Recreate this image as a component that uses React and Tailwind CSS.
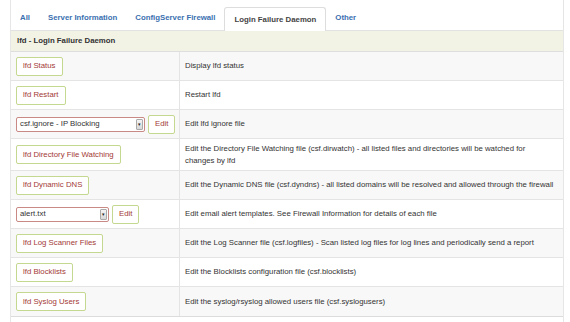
const tabs = ["All", "Server Information", "ConfigServer Firewall", "Login Failure Daemon", "Other"];

const rows = [
    { type: "button", label: "lfd Status", desc: "Display lfd status" },
    { type: "button", label: "lfd Restart", desc: "Restart lfd" },
    { type: "select", label: "csf.ignore - IP Blocking", width: "w-[129px]", desc: "Edit lfd ignore file" },
    {
        type: "button",
        label: "lfd Directory File Watching",
        desc: (
            <>
                Edit the Directory File Watching file (csf.dirwatch) - all listed files and directories will be watched for
                <br />
                changes by lfd
            </>
        ),
        tall: true,
    },
    {
        type: "button",
        label: "lfd Dynamic DNS",
        desc: "Edit the Dynamic DNS file (csf.dyndns) - all listed domains will be resolved and allowed through the firewall",
    },
    { type: "select", label: "alert.txt", width: "w-[93px]", desc: "Edit email alert templates. See Firewall Information for details of each file" },
    {
        type: "button",
        label: "lfd Log Scanner Files",
        desc: "Edit the Log Scanner file (csf.logfiles) - Scan listed log files for log lines and periodically send a report",
    },
    { type: "button", label: "lfd Blocklists", desc: "Edit the Blocklists configuration file (csf.blocklists)" },
    { type: "button", label: "lfd Syslog Users", desc: "Edit the syslog/rsyslog allowed users file (csf.syslogusers)" },
];

const Btn = ({ children }) => (
    <span className="inline-flex items-center h-[19px] px-[6px] border border-[#c5d88f] rounded-[2px] bg-white text-[#a33a36] text-[7.8px] leading-none">
        {children}
    </span>
);

const FakeSelect = ({ label, width }) => (
    <span className={`inline-flex items-center h-[15px] ${width} border border-[#c98a85] rounded-[2px] bg-white pl-[3px] pr-[1px] text-[7.8px] text-[#333]`}>
        <span className="flex-1 leading-none">{label}</span>
        <span className="w-[7px] h-[11px] flex items-center justify-center bg-gradient-to-b from-[#f4f4f4] to-[#d8d8d8] border border-[#aaa] rounded-[1px] text-[5px] leading-none text-[#222]">
            ▾
        </span>
    </span>
);

export default function App() {
    return (
        <div className="w-[570px] h-[322px] bg-white overflow-hidden font-['Liberation_Sans',Arial,sans-serif]">
            <div className="ml-[10px] w-[554px] h-full border-l border-r border-[#e6e6e6]">
                {/* Tabs */}
                <div className="flex items-end h-[31px] border-b border-[#e2e2e2]">
                    {tabs.map((t) => (
                        <div
                            key={t}
                            className={
                                t === "Login Failure Daemon"
                                    ? "h-[24px] px-[9px] flex items-center border border-b-0 border-[#ddd] rounded-t-[3px] bg-white text-[#444] text-[7.8px] font-bold -mb-px"
                                    : "h-[24px] px-[9px] flex items-center text-[#3a6fb0] text-[7.8px] font-bold"
                            }
                        >
                            {t}
                        </div>
                    ))}
                </div>

                {/* Panel */}
                <div className="border-b border-[#dcdcdc]">
                    <div className="h-[21px] flex items-center pl-[6px] bg-[#f2f2e5] border-b border-[#dedede] text-[7.8px] font-bold text-[#333]">
                        lfd - Login Failure Daemon
                    </div>
                    {rows.map((r, i) => (
                        <div
                            key={r.label}
                            className={`flex ${r.tall ? "h-[32px]" : "h-[29px]"} border-b border-[#e4e4e4] last:border-b-0 ${i % 2 === 0 ? "bg-[#f8f8f8]" : "bg-white"}`}
                        >
                            <div className="w-[169px] shrink-0 flex items-center gap-[3px] pl-[5px] border-r border-[#e4e4e4]">
                                {r.type === "button" ? (
                                    <Btn>{r.label}</Btn>
                                ) : (
                                    <>
                                        <FakeSelect label={r.label} width={r.width} />
                                        <Btn>Edit</Btn>
                                    </>
                                )}
                            </div>
                            <div className="flex-1 flex items-center pl-[5px] pr-[3px] whitespace-nowrap text-[7.8px] leading-[12px] text-[#333]">
                                <span>{r.desc}</span>
                            </div>
                        </div>
                    ))}
                </div>
            </div>
        </div>
    );
}
